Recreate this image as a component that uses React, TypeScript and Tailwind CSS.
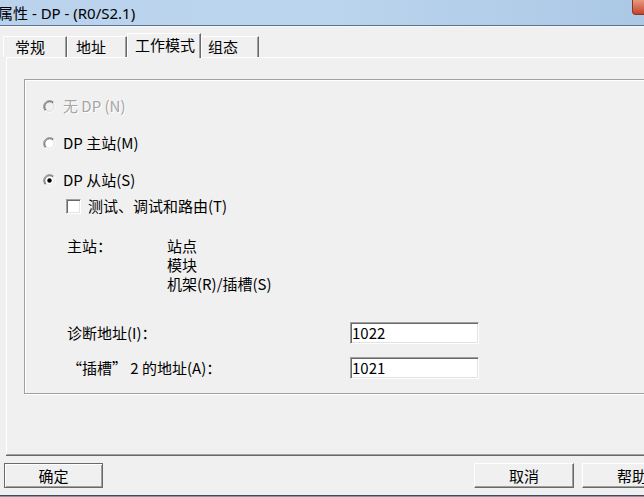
import React from "react";

const cjk = "font-['Noto_Sans_CJK_SC',sans-serif]";

function Radio({ checked, disabled }: { checked?: boolean; disabled?: boolean }) {
  return (
    <svg width="13" height="13" viewBox="0 0 13 13" className="shrink-0">
      <circle cx="6.5" cy="6.5" r="5.5" fill={disabled ? "#f0f0f0" : "#fff"} />
      <path d="M2.26 10.74A6 6 0 0 1 10.74 2.26" fill="none" stroke="#8c8c8c" />
      <path d="M10.74 2.26A6 6 0 0 1 2.26 10.74" fill="none" stroke="#fdfdfd" />
      <path d="M2.97 10.03A5 5 0 0 1 10.03 2.97" fill="none" stroke="#5a5a5a" />
      <path d="M10.03 2.97A5 5 0 0 1 2.97 10.03" fill="none" stroke="#dcdcdc" />
      {checked && <circle cx="6.5" cy="6.5" r="2.2" fill="#000" />}
    </svg>
  );
}

function Tab({ label, width, pad, active }: { label: string; width: string; pad: string; active?: boolean }) {
  if (active) {
    return (
      <div
        className={`relative z-10 -mb-px flex h-[25px] shrink-0 items-center border-l border-t border-white bg-[#f0f0f0] shadow-[inset_-1px_0_0_#a0a0a0] border-r border-r-[#696969] ${width} ${pad}`}
      >
        {label}
      </div>
    );
  }
  return (
    <div
      className={`flex h-[21px] shrink-0 items-center border-l border-t border-white border-r border-r-[#696969] shadow-[inset_-1px_0_0_#a0a0a0] ${width} ${pad}`}
    >
      {label}
    </div>
  );
}

function Field({ label, value, top }: { label: string; value: string; top: string }) {
  return (
    <div className={`ml-[42px] flex h-[22px] items-center ${top}`}>
      <span className="w-[283px] shrink-0">{label}</span>
      <div className="flex h-[22px] w-[129px] items-center border border-b-white border-l-[#a0a0a0] border-r-white border-t-[#a0a0a0] bg-white pl-[1px] shadow-[inset_1px_1px_0_#696969,inset_-1px_-1px_0_#e3e3e3]">
        {value}
      </div>
    </div>
  );
}

function Button({ label, def, className }: { label: string; def?: boolean; className: string }) {
  return (
    <div
      className={`flex h-[25px] shrink-0 items-center justify-center bg-[#f0f0f0] ${
        def
          ? "border border-[#696969] shadow-[inset_1px_1px_0_#fff,inset_-1px_-1px_0_#a0a0a0]"
          : "border border-b-[#696969] border-l-white border-r-[#696969] border-t-white shadow-[inset_-1px_-1px_0_#a0a0a0]"
      } ${className}`}
    >
      {label}
    </div>
  );
}

export default function App() {
  return (
    <div className={`relative flex h-[497px] w-[644px] flex-col overflow-hidden bg-[#f0f0f0] text-[15px] leading-[20px] text-black ${cjk}`}>
      <div className="flex h-[26px] shrink-0 items-center border-b border-[#5a7391] bg-gradient-to-r from-[#bad2ec] via-[#bcd5ee] to-[#abc8e5]">
        <span className="-ml-[2px] font-['Noto_Sans','Noto_Sans_CJK_SC',sans-serif] text-[15px] text-black">属性 - DP - (R0/S2.1)</span>
      </div>
      <div className="absolute right-0 top-0 h-[15px] w-[12px] rounded-bl-[4px] border-b border-l border-[#8e3422] bg-gradient-to-b from-[#e8977f] to-[#c1432c]" />

      <div className="flex h-[31px] shrink-0 items-end border-t border-[#f8f8f8] pl-[3px]">
        <Tab label="常规" width="w-[64px]" pad="pl-[11px]" />
        <Tab label="地址" width="w-[60px]" pad="pl-[8px]" />
        <Tab label="工作模式" width="w-[74px]" pad="pl-[7px] pb-[3px]" active />
        <Tab label="组态" width="w-[58px]" pad="pl-[6px]" />
      </div>

      <div className="ml-[6px] h-[398px] w-[720px] shrink-0 border-b border-l border-t border-b-[#a0a0a0] border-l-white border-t-white shadow-[0_1px_0_#696969]">
        <div className="ml-[17px] mt-[21px] flex h-[315px] w-[700px] flex-col border border-[#a0a0a0] shadow-[1px_1px_0_#fff,inset_1px_1px_0_#fff]">
          <div className="ml-[18px] mt-[16px] flex h-[20px] items-center gap-[7px] text-[#a6a6a6] [text-shadow:1px_1px_0_#fff]">
            <Radio disabled />
            <span>无 DP (N)</span>
          </div>
          <div className="ml-[18px] mt-[17px] flex h-[20px] items-center gap-[7px]">
            <Radio />
            <span>DP 主站(M)</span>
          </div>
          <div className="ml-[18px] mt-[17px] flex h-[20px] items-center gap-[7px]">
            <Radio checked />
            <span>DP 从站(S)</span>
          </div>
          <div className="ml-[41px] mt-[6px] flex h-[20px] items-center gap-[7px]">
            <div className="h-[15px] w-[15px] shrink-0 border border-b-white border-l-[#a0a0a0] border-r-white border-t-[#a0a0a0] bg-white shadow-[inset_1px_1px_0_#696969,inset_-1px_-1px_0_#e3e3e3]" />
            <span>测试、调试和路由(T)</span>
          </div>
          <div className="ml-[42px] mt-[20px] flex leading-[19px]">
            <span className="w-[100px] shrink-0">主站：</span>
            <div className="flex flex-col">
              <span>站点</span>
              <span>模块</span>
              <span>机架(R)/插槽(S)</span>
            </div>
          </div>
          <Field label="诊断地址(I)：" value="1022" top="mt-[29px]" />
          <Field label="“插槽” 2 的地址(A)：" value="1021" top="mt-[13px]" />
        </div>
      </div>

      <div className="mt-[8px] flex shrink-0">
        <Button label="确定" def className="ml-[4px] w-[99px]" />
        <Button label="取消" className="ml-[371px] w-[100px]" />
        <Button label="帮助" className="ml-[8px] w-[100px]" />
      </div>

      <div className="mt-auto h-[2px] shrink-0 border-t border-[#3d4b5c] bg-[#8a96a4]" />
    </div>
  );
}
